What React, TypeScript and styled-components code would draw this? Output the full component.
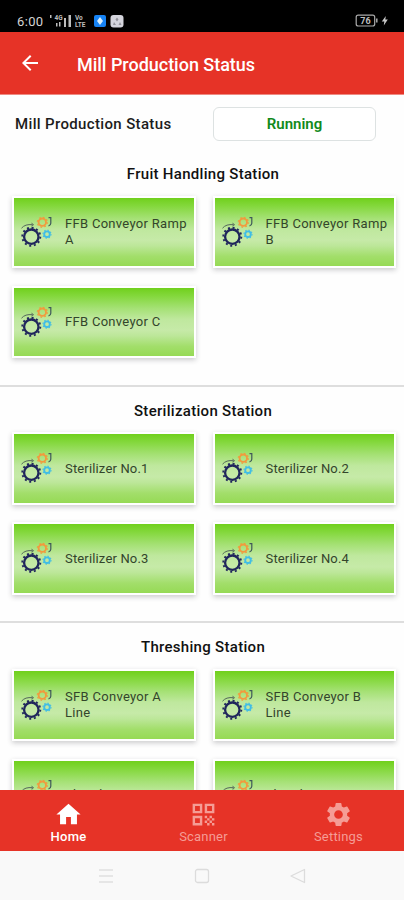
import React from "react";
import styled, { createGlobalStyle } from "styled-components";
import { MdArrowBack, MdHome, MdQrCode, MdSettings } from "react-icons/md";

const GlobalStyle = createGlobalStyle`
  * { box-sizing: border-box; }
  body { margin: 0; background: #fff; font-family: Roboto, "Liberation Sans", sans-serif; }
`;

const Screen = styled.div`
  display: flex;
  flex-direction: column;
  width: 404px;
  height: 900px;
  overflow: hidden;
  background: #fefefe;
`;

const StatusBar = styled.div`
  display: flex;
  align-items: center;
  flex: none;
  height: 32px;
  padding: 10px 15px 0 17px;
  background: #000;
  color: #d4d4d4;
`;

const Clock = styled.span`
  width: 32px;
  padding-top: 1px;
  font-size: 13px;
  letter-spacing: 0.35px;
  line-height: 16px;
`;

const StatusSpacer = styled.div`
  flex: 1;
`;

const Header = styled.header`
  display: flex;
  align-items: center;
  flex: none;
  height: 63px;
  padding: 0 18px;
  background: #e63327;
  color: #fff;
  border-bottom: 1px solid #ee8a82;
`;

const HeaderTitle = styled.h1`
  margin: 3px 0 0 35px;
  font-size: 18px;
  font-weight: 500;
  line-height: 24px;
  letter-spacing: -0.02px;
`;

const Content = styled.main`
  flex: 1;
  min-height: 0;
  overflow: hidden;
`;

const SummaryRow = styled.div`
  display: flex;
  align-items: center;
  height: 55px;
  padding: 2px 28px 0 15px;
`;

const SummaryLabel = styled.span`
  flex: 1;
  color: #1c1c1c;
  font-size: 15px;
  font-weight: 500;
  letter-spacing: 0.35px;
`;

const StatusPill = styled.div`
  display: flex;
  align-items: center;
  justify-content: center;
  width: 163px;
  height: 34px;
  border: 1px solid #dde2e2;
  border-radius: 6px;
  background: #fff;
  color: #128a1b;
  font-size: 15px;
  font-weight: 600;
  letter-spacing: 0;
`;

const StationSection = styled.section`
  height: 236.5px;
  border-bottom: 2px solid #dedede;
`;

const StationTitle = styled.h2`
  margin: 0;
  padding-top: 14px;
  padding-left: 2px;
  height: 45.5px;
  color: #111;
  font-size: 15px;
  font-weight: 500;
  line-height: 20px;
  letter-spacing: 0.3px;
  text-align: center;
`;

const CardGrid = styled.div`
  display: grid;
  grid-template-columns: 183.5px 183.5px;
  grid-auto-rows: 72.5px;
  gap: 17.5px 17px;
  padding-left: 12px;
`;

const MachineCard = styled.div`
  display: flex;
  align-items: center;
  padding: 0 2px 0 6px;
  border: 2px solid #fff;
  background: linear-gradient(180deg, #70d01c 0%, #84d83d 12%, #a5e175 30%, #bfe89e 46%, #c6eaa8 62%, #bde79a 70%, #a2de6a 86%, #96da55 100%) padding-box;
  box-shadow: 0 2px 5px rgba(40, 40, 50, 0.24);
`;

const MachineName = styled.span<{ $compact?: boolean }>`
  width: 123.5px;
  padding-top: 1px;
  margin-left: 13px;
  color: #33452b;
  font-size: 13px;
  line-height: 16px;
  letter-spacing: ${(p) => (p.$compact ? "0.16px" : "0.3px")};
`;

const TabBar = styled.nav`
  display: grid;
  grid-template-columns: repeat(3, 135px);
  flex: none;
  height: 61px;
  padding: 10px 0 0 1px;
  background: #e63327;
`;

const Tab = styled.div<{ $active?: boolean }>`
  display: flex;
  flex-direction: column;
  align-items: center;
  color: ${(p) => (p.$active ? "#fff" : "#f59c95")};
  font-size: 13px;
  font-weight: ${(p) => (p.$active ? 500 : 400)};
  line-height: 16px;
  letter-spacing: ${(p) => (p.$active ? "0.3px" : "0.2px")};
  svg { display: block; }
`;

const SystemNav = styled.div`
  display: flex;
  align-items: center;
  justify-content: center;
  gap: 80px;
  flex: none;
  height: 49px;
  background: #f9f9f9;
`;

const SignalIcons = () => (
  <svg width="76" height="14" viewBox="49 14 76 14" fill="#bdbdbd">
    <path d="M50 15h1.500v3H50zM56 23h1.500v3.500H56zM59 22h1.500v4.500H59zM64 18h2v9h-2zM68.500 15H71v12h-2.500z" />
    <g fontFamily="Roboto, sans-serif" fontWeight="700">
      <text x="54.500" y="20" fontSize="6.500">4G</text>
      <text x="75" y="20" fontSize="6.500">Vo</text>
      <text x="75" y="27" fontSize="6.500">LTE</text>
    </g>
    <rect x="94" y="15" width="12" height="12" rx="2" fill="#1683f5" />
    <path d="M100 17l3 4-3 4-3-4z" fill="#d8efff" />
    <rect x="110.500" y="15" width="13" height="12.500" rx="3" fill="#d4d4dc" />
    <path d="M117 17.500l1.500 2-1.500 2-1.500-2zM114 22l2 3h-3zM120 22l1.500 3h-3z" fill="#92929b" />
  </svg>
);

const BatteryIcon = () => (
  <svg width="34" height="14" viewBox="355 14 34 14" fill="none" stroke="#aaa">
    <rect x="356.200" y="15.200" width="18.500" height="10.800" rx="2" strokeWidth="1.200" />
    <path d="M376.800 18.500v4" strokeWidth="1.500" />
    <text x="360.300" y="24" fontFamily="Roboto, sans-serif" fontWeight="700" fontSize="9" fill="#bebebe" stroke="none">76</text>
    <path d="M385.800 16l-4 5.500h2.500l-.5 4 4-6h-2.500z" fill="#c8c8c8" stroke="none" />
  </svg>
);

const GearsIcon = () => (
  <svg width="32" height="32" viewBox="0 0.800 32 32" fill="none">
    <circle cx="11.300" cy="21.500" r="7.200" stroke="#20265c" strokeWidth="2.300" />
    <circle cx="11.300" cy="21.500" r="9" stroke="#20265c" strokeWidth="1.900" strokeDasharray="2 2.712" />
    <circle cx="22.300" cy="7" r="3.700" stroke="#f29a3e" strokeWidth="1.900" />
    <circle cx="22.300" cy="7" r="5" stroke="#f29a3e" strokeWidth="1.200" strokeDasharray="1.700 2.227" />
    <circle cx="27" cy="19" r="2.800" stroke="#40bde6" strokeWidth="1.900" />
    <circle cx="27" cy="19" r="4.100" stroke="#40bde6" strokeWidth="1.100" strokeDasharray="1.300 1.920" />
    <path d="M1.500 13C4 10 7.500 9 12.500 9.500M11.500 8l2 1.500-2 1.200" stroke="#53665a" strokeWidth="1" />
    <path d="M28.500 2.500h2.300v5.500q0 2-2.300 2.800" stroke="#3f585a" strokeWidth="1.200" />
  </svg>
);

const stations = [
  { title: "Fruit Handling Station", machines: ["FFB Conveyor Ramp A", "FFB Conveyor Ramp B", "FFB Conveyor C"] },
  { title: "Sterilization Station", compact: true, machines: ["Sterilizer No.1", "Sterilizer No.2", "Sterilizer No.3", "Sterilizer No.4"] },
  { title: "Threshing Station", machines: ["SFB Conveyor A Line", "SFB Conveyor B Line", "Thresher No.1", "Thresher No.2"] },
];

export default function App() {
  return (
    <Screen>
      <GlobalStyle />
      <StatusBar>
        <Clock>6:00</Clock>
        <SignalIcons />
        <StatusSpacer />
        <BatteryIcon />
      </StatusBar>
      <Header>
        <MdArrowBack size={24} />
        <HeaderTitle>Mill Production Status</HeaderTitle>
      </Header>
      <Content>
        <SummaryRow>
          <SummaryLabel>Mill Production Status</SummaryLabel>
          <StatusPill>Running</StatusPill>
        </SummaryRow>
        {stations.map((station) => (
          <StationSection key={station.title}>
            <StationTitle>{station.title}</StationTitle>
            <CardGrid>
              {station.machines.map((name) => (
                <MachineCard key={name}>
                  <GearsIcon />
                  <MachineName $compact={station.compact}>{name}</MachineName>
                </MachineCard>
              ))}
            </CardGrid>
          </StationSection>
        ))}
      </Content>
      <TabBar>
        <Tab $active><MdHome size={29} />Home</Tab>
        <Tab><MdQrCode size={29} />Scanner</Tab>
        <Tab><MdSettings size={29} />Settings</Tab>
      </TabBar>
      <SystemNav>
        <svg width="16" height="16" viewBox="0 0 16 16" stroke="#e0e0e0" strokeWidth="1.300"><path d="M1 2h14M1 8h14M1 14h14" /></svg>
        <svg width="16" height="16" viewBox="0 0 16 16" fill="none" stroke="#dcdcdc" strokeWidth="1.300"><rect x="1.500" y="1.500" width="13" height="13" rx="2" /></svg>
        <svg width="16" height="16" viewBox="0 0 16 16" fill="none" stroke="#dcdcdc" strokeWidth="1.300" strokeLinejoin="round"><path d="M1 8L14.500 1.500v13z" /></svg>
      </SystemNav>
    </Screen>
  );
}
